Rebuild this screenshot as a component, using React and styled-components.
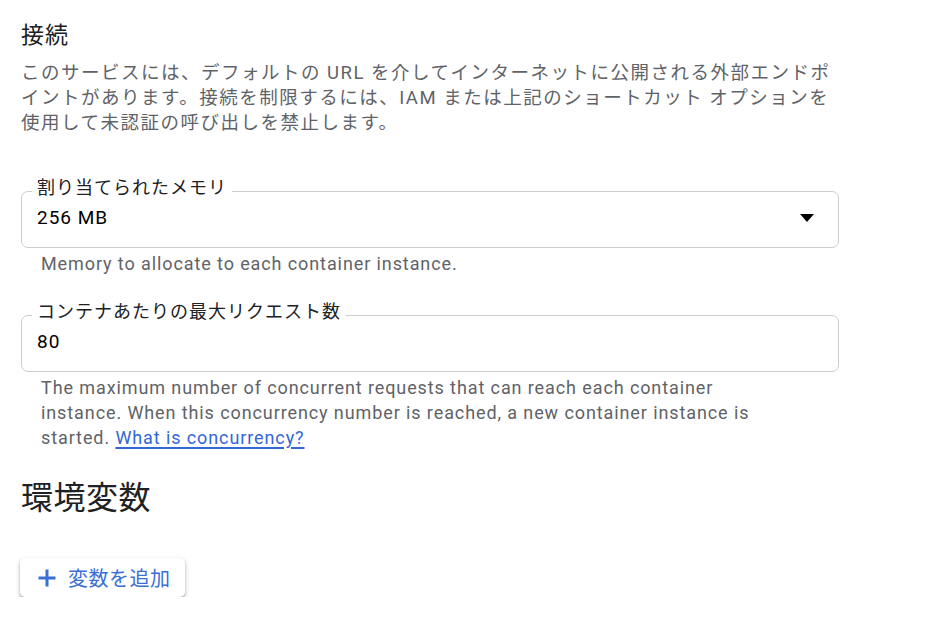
import React from 'react';
import styled, { createGlobalStyle } from 'styled-components';

const GlobalStyle = createGlobalStyle`
  html, body {
    margin: 0;
    padding: 0;
    background: #fff;
  }
  body {
    font-family: Roboto, "Noto Sans CJK JP", sans-serif;
    color: #202124;
  }
`;

const Page = styled.div`
  padding: 22px 20px 0 21px;
  width: 818px;
`;

const SectionTitle = styled.h2`
  margin: 0;
  font-size: 23px;
  font-weight: 400;
  letter-spacing: 1px;
  line-height: 28px;
  color: #202124;
`;

const Description = styled.p`
  margin: 11px 0 0;
  font-size: 18.5px;
  letter-spacing: 1.5px;
  line-height: 25px;
  color: #5f6368;
`;

const Field = styled.fieldset`
  margin: ${(p) => p.$top}px 0 0;
  padding: 0 16px 0 15px;
  border: 1.5px solid #cdcdcd;
  border-radius: 7px;
  min-width: 0;
  height: 71px;
  box-sizing: border-box;
`;

const Legend = styled.legend`
  padding: 0 5px 6px;
  margin-left: -5px;
  font-size: 18px;
  letter-spacing: 1px;
  line-height: 22px;
  color: #202124;
`;

const ValueRow = styled.div`
  display: flex;
  align-items: center;
  justify-content: space-between;
  margin-top: 1px;
  font-size: 19px;
  letter-spacing: 1px;
  line-height: 24px;
  color: #000;
`;

const Caret = styled.span`
  width: 0;
  height: 0;
  margin-right: 8px;
  border-left: 7px solid transparent;
  border-right: 7px solid transparent;
  border-top: 8px solid #000;
`;

const Helper = styled.div`
  margin: 3px 0 0 20px;
  font-size: 18px;
  letter-spacing: 0.9px;
  line-height: 25px;
  color: #5f6368;
`;

const Link = styled.a`
  color: #3367d6;
  text-decoration: underline;
  text-underline-offset: 3px;
  text-decoration-thickness: 2px;
`;

const Heading = styled.h1`
  margin: 28px 0 0;
  font-size: 32px;
  font-weight: 400;
  letter-spacing: 0.5px;
  line-height: 40px;
  color: #202124;
`;

const AddButton = styled.button`
  margin: 40px 0 0 -1px;
  display: inline-flex;
  align-items: center;
  gap: 12px;
  height: 39px;
  padding: 0 14px 0 18px;
  border: none;
  border-radius: 5px;
  background: #fff;
  box-shadow: 0 1px 1px rgba(0, 0, 0, 0.14), 0 2px 4px rgba(0, 0, 0, 0.3);
  color: #3a6fd8;
  font-family: Roboto, "Noto Sans CJK JP", sans-serif;
  font-size: 20px;
  letter-spacing: 0.5px;
  cursor: pointer;
`;

function PlusIcon() {
  return (
    <svg width="18" height="18" viewBox="0 0 18 18">
      <path d="M9 0.5v17M0.5 9h17" stroke="#3a6fd8" strokeWidth="3" fill="none" />
    </svg>
  );
}

export default function App() {
  return (
    <>
      <GlobalStyle />
      <Page>
        <SectionTitle>接続</SectionTitle>
        <Description>
          このサービスには、デフォルトの URL を介してインターネットに公開される外部エンドポ
          <br />
          イントがあります。接続を制限するには、IAM または上記のショートカット オプションを
          <br />
          使用して未認証の呼び出しを禁止します。
        </Description>

        <Field $top={41}>
          <Legend>割り当てられたメモリ</Legend>
          <ValueRow>
            <span>256 MB</span>
            <Caret />
          </ValueRow>
        </Field>
        <Helper>Memory to allocate to each container instance.</Helper>

        <Field $top={25}>
          <Legend>コンテナあたりの最大リクエスト数</Legend>
          <ValueRow>
            <span>80</span>
          </ValueRow>
        </Field>
        <Helper>
          The maximum number of concurrent requests that can reach each container
          <br />
          instance. When this concurrency number is reached, a new container instance is
          <br />
          started. <Link href="#">What is concurrency?</Link>
        </Helper>

        <Heading>環境変数</Heading>

        <AddButton>
          <PlusIcon />
          変数を追加
        </AddButton>
      </Page>
    </>
  );
}
